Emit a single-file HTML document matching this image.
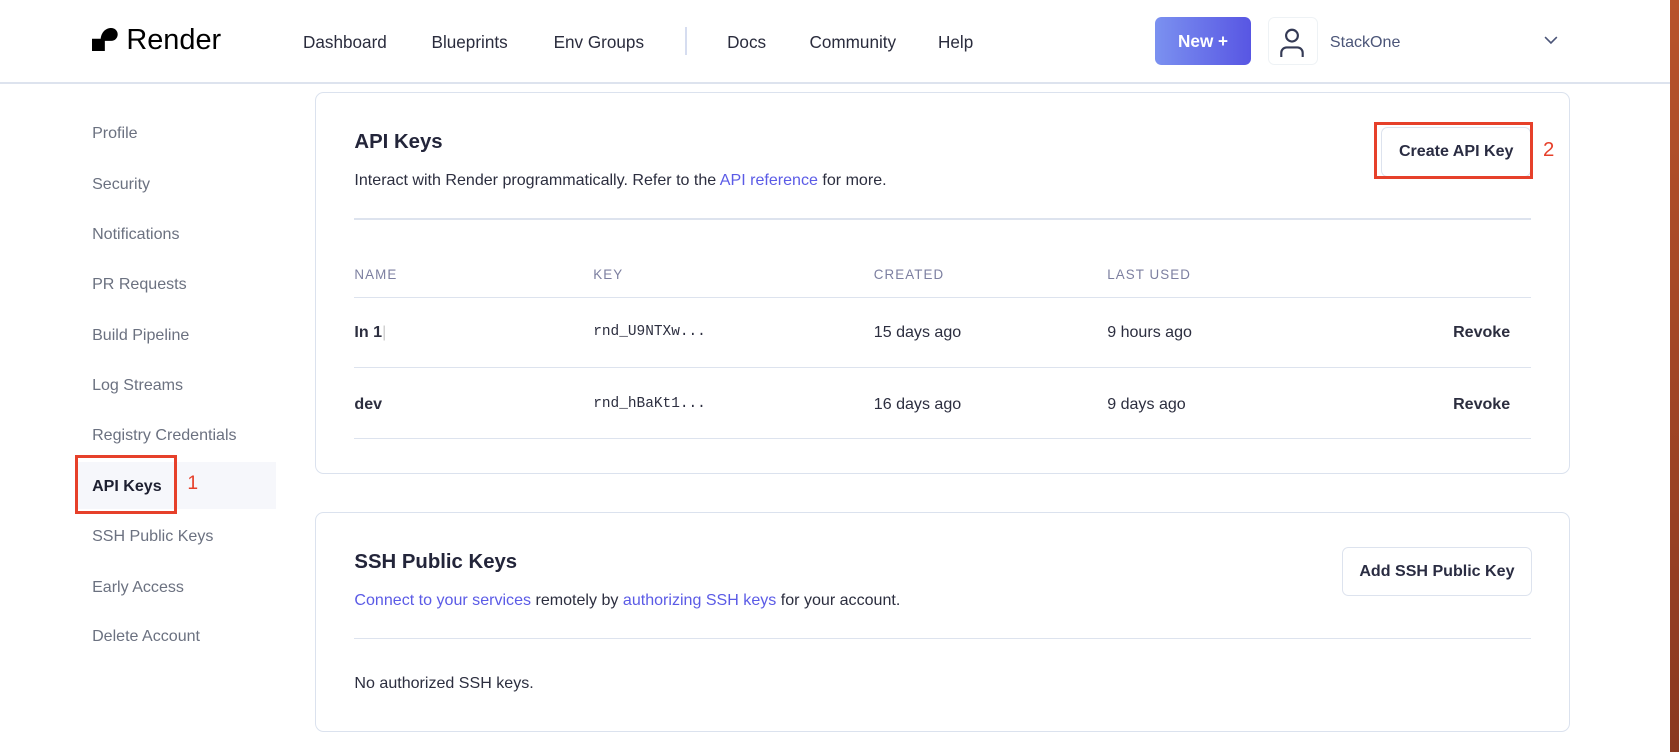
<!DOCTYPE html>
<html><head><meta charset="utf-8"><style>
html{zoom:1.0708}
body{margin:0;width:1568px;height:702px;overflow:hidden;background:#fff;font-family:"Liberation Sans",sans-serif;position:relative;color:#23253a}
.a{position:absolute;white-space:nowrap}
.nav{font-size:16px;color:#2a2c3d;top:30px}
.side{font-size:15px;color:#6b7180;left:86px}
.card{position:absolute;left:294px;width:1170px;border:1px solid #dbe2ee;border-radius:8px;background:#fff}
.hr{position:absolute;left:331px;width:1099px;height:1px;background:#dde3ee}
.th{font-size:12.5px;letter-spacing:1px;color:#7c7fa0;top:249px}
.td{font-size:15px;color:#2c2e3f}
.mono{font-family:"Liberation Mono",monospace;font-size:13.5px;color:#2c2e3f}
.btn{position:absolute;border:1px solid #dde3ee;border-radius:6px;background:#fff;font-size:15px;font-weight:bold;color:#2a2c42;text-align:center}
.red{position:absolute;border:3px solid #e6402a;box-sizing:border-box}
.link{color:#5b5be6}
</style></head><body>
<svg class="a" style="left:86px;top:26px" width="24" height="22" viewBox="0 0 24 22"><path d="M0 10h8v12H0z M8 12c0-7 4-12 10-12a6 6 0 0 1 0 12h-6v10H8z" fill="#000"/></svg>
<div class="a" style="left:118px;top:22px;font-size:27px;color:#000">Render</div>
<div class="a nav" style="left:283px">Dashboard</div>
<div class="a nav" style="left:403px">Blueprints</div>
<div class="a nav" style="left:517px">Env Groups</div>
<div class="a" style="left:640px;top:25px;width:2px;height:26px;background:#d6ddf0"></div>
<div class="a nav" style="left:679px">Docs</div>
<div class="a nav" style="left:756px">Community</div>
<div class="a nav" style="left:876px">Help</div>
<div class="a" style="left:1079px;top:16px;width:89px;height:45px;border-radius:6px;background:linear-gradient(90deg,#7b91f0,#5856e3);color:#fff;font-size:16px;font-weight:bold;text-align:center;line-height:45px">New +</div>
<div class="a" style="left:1184px;top:16px;width:47px;height:45px;border:1px solid #eef2f5;border-radius:6px;box-sizing:border-box"></div>
<svg class="a" style="left:1193px;top:24px" width="28" height="30" viewBox="0 0 28 30"><circle cx="14" cy="9" r="5.5" fill="none" stroke="#343a55" stroke-width="2"/><path d="M4 29v-4a5 5 0 0 1 5-5h10a5 5 0 0 1 5 5v4" fill="none" stroke="#343a55" stroke-width="2"/></svg>
<div class="a" style="left:1242px;top:31px;font-size:15px;color:#4b5578">StackOne</div>
<svg class="a" style="left:1442px;top:34px" width="13" height="8" viewBox="0 0 13 8"><path d="M1 1l5.5 5.5L12 1" fill="none" stroke="#4b5578" stroke-width="1.5"/></svg>
<div class="a" style="left:0;top:77px;width:1560px;height:1px;background:#dde3ee"></div>
<div class="a" style="left:1560px;top:0;width:8px;height:702px;background:linear-gradient(180deg,#b8532b,#8a3820)"></div>
<div class="a" style="left:72px;top:431px;width:186px;height:44px;background:#f6f7fb"></div>
<div class="a side" style="top:116px">Profile</div>
<div class="a side" style="top:163px">Security</div>
<div class="a side" style="top:210px">Notifications</div>
<div class="a side" style="top:257px">PR Requests</div>
<div class="a side" style="top:304px">Build Pipeline</div>
<div class="a side" style="top:351px">Log Streams</div>
<div class="a side" style="top:398px">Registry Credentials</div>
<div class="a side" style="top:445px;color:#1d1f30;font-weight:bold">API Keys</div>
<div class="a side" style="top:492px">SSH Public Keys</div>
<div class="a side" style="top:540px">Early Access</div>
<div class="a side" style="top:586px">Delete Account</div>
<div class="red" style="left:70px;top:425px;width:95px;height:55px"></div>
<div class="a" style="left:175px;top:442px;font-size:18px;color:#e6402a">1</div>
<div class="card" style="top:86px;height:355px"></div>
<div class="a" style="left:331px;top:122px;font-size:19px;font-weight:bold;color:#23253a">API Keys</div>
<div class="a" style="left:331px;top:160px;font-size:15px;color:#2c2e3f">Interact with Render programmatically. Refer to the <span class="link">API reference</span> for more.</div>
<div class="btn" style="left:1290px;top:119px;width:138px;height:44px;line-height:44px">Create API Key</div>
<div class="red" style="left:1283px;top:114px;width:149px;height:53px"></div>
<div class="a" style="left:1441px;top:130px;font-size:19px;color:#e6402a">2</div>
<div class="hr" style="top:204px"></div>
<div class="a th" style="left:331px">NAME</div>
<div class="a th" style="left:554px">KEY</div>
<div class="a th" style="left:816px">CREATED</div>
<div class="a th" style="left:1034px">LAST USED</div>
<div class="hr" style="top:277px"></div>
<div class="a td" style="left:331px;top:302px;font-weight:bold">In 1<span style="color:#ccc;font-weight:normal">|</span></div>
<div class="a mono" style="left:554px;top:303px">rnd_U9NTXw...</div>
<div class="a td" style="left:816px;top:302px">15 days ago</div>
<div class="a td" style="left:1034px;top:302px">9 hours ago</div>
<div class="a td" style="left:1357px;top:302px;font-weight:bold">Revoke</div>
<div class="hr" style="top:343px"></div>
<div class="a td" style="left:331px;top:369px;font-weight:bold">dev</div>
<div class="a mono" style="left:554px;top:370px">rnd_hBaKt1...</div>
<div class="a td" style="left:816px;top:369px">16 days ago</div>
<div class="a td" style="left:1034px;top:369px">9 days ago</div>
<div class="a td" style="left:1357px;top:369px;font-weight:bold">Revoke</div>
<div class="hr" style="top:409px"></div>
<div class="card" style="top:478px;height:204px"></div>
<div class="a" style="left:331px;top:515px;font-size:19px;font-weight:bold;color:#23253a">SSH Public Keys</div>
<div class="a" style="left:331px;top:552px;font-size:15px;color:#2c2e3f"><span class="link">Connect to your services</span> remotely by <span class="link">authorizing SSH keys</span> for your account.</div>
<div class="btn" style="left:1253px;top:511px;width:176px;height:44px;line-height:44px">Add SSH Public Key</div>
<div class="hr" style="top:596px"></div>
<div class="a" style="left:331px;top:629px;font-size:15px;color:#2c2e3f">No authorized SSH keys.</div>
</body></html>
